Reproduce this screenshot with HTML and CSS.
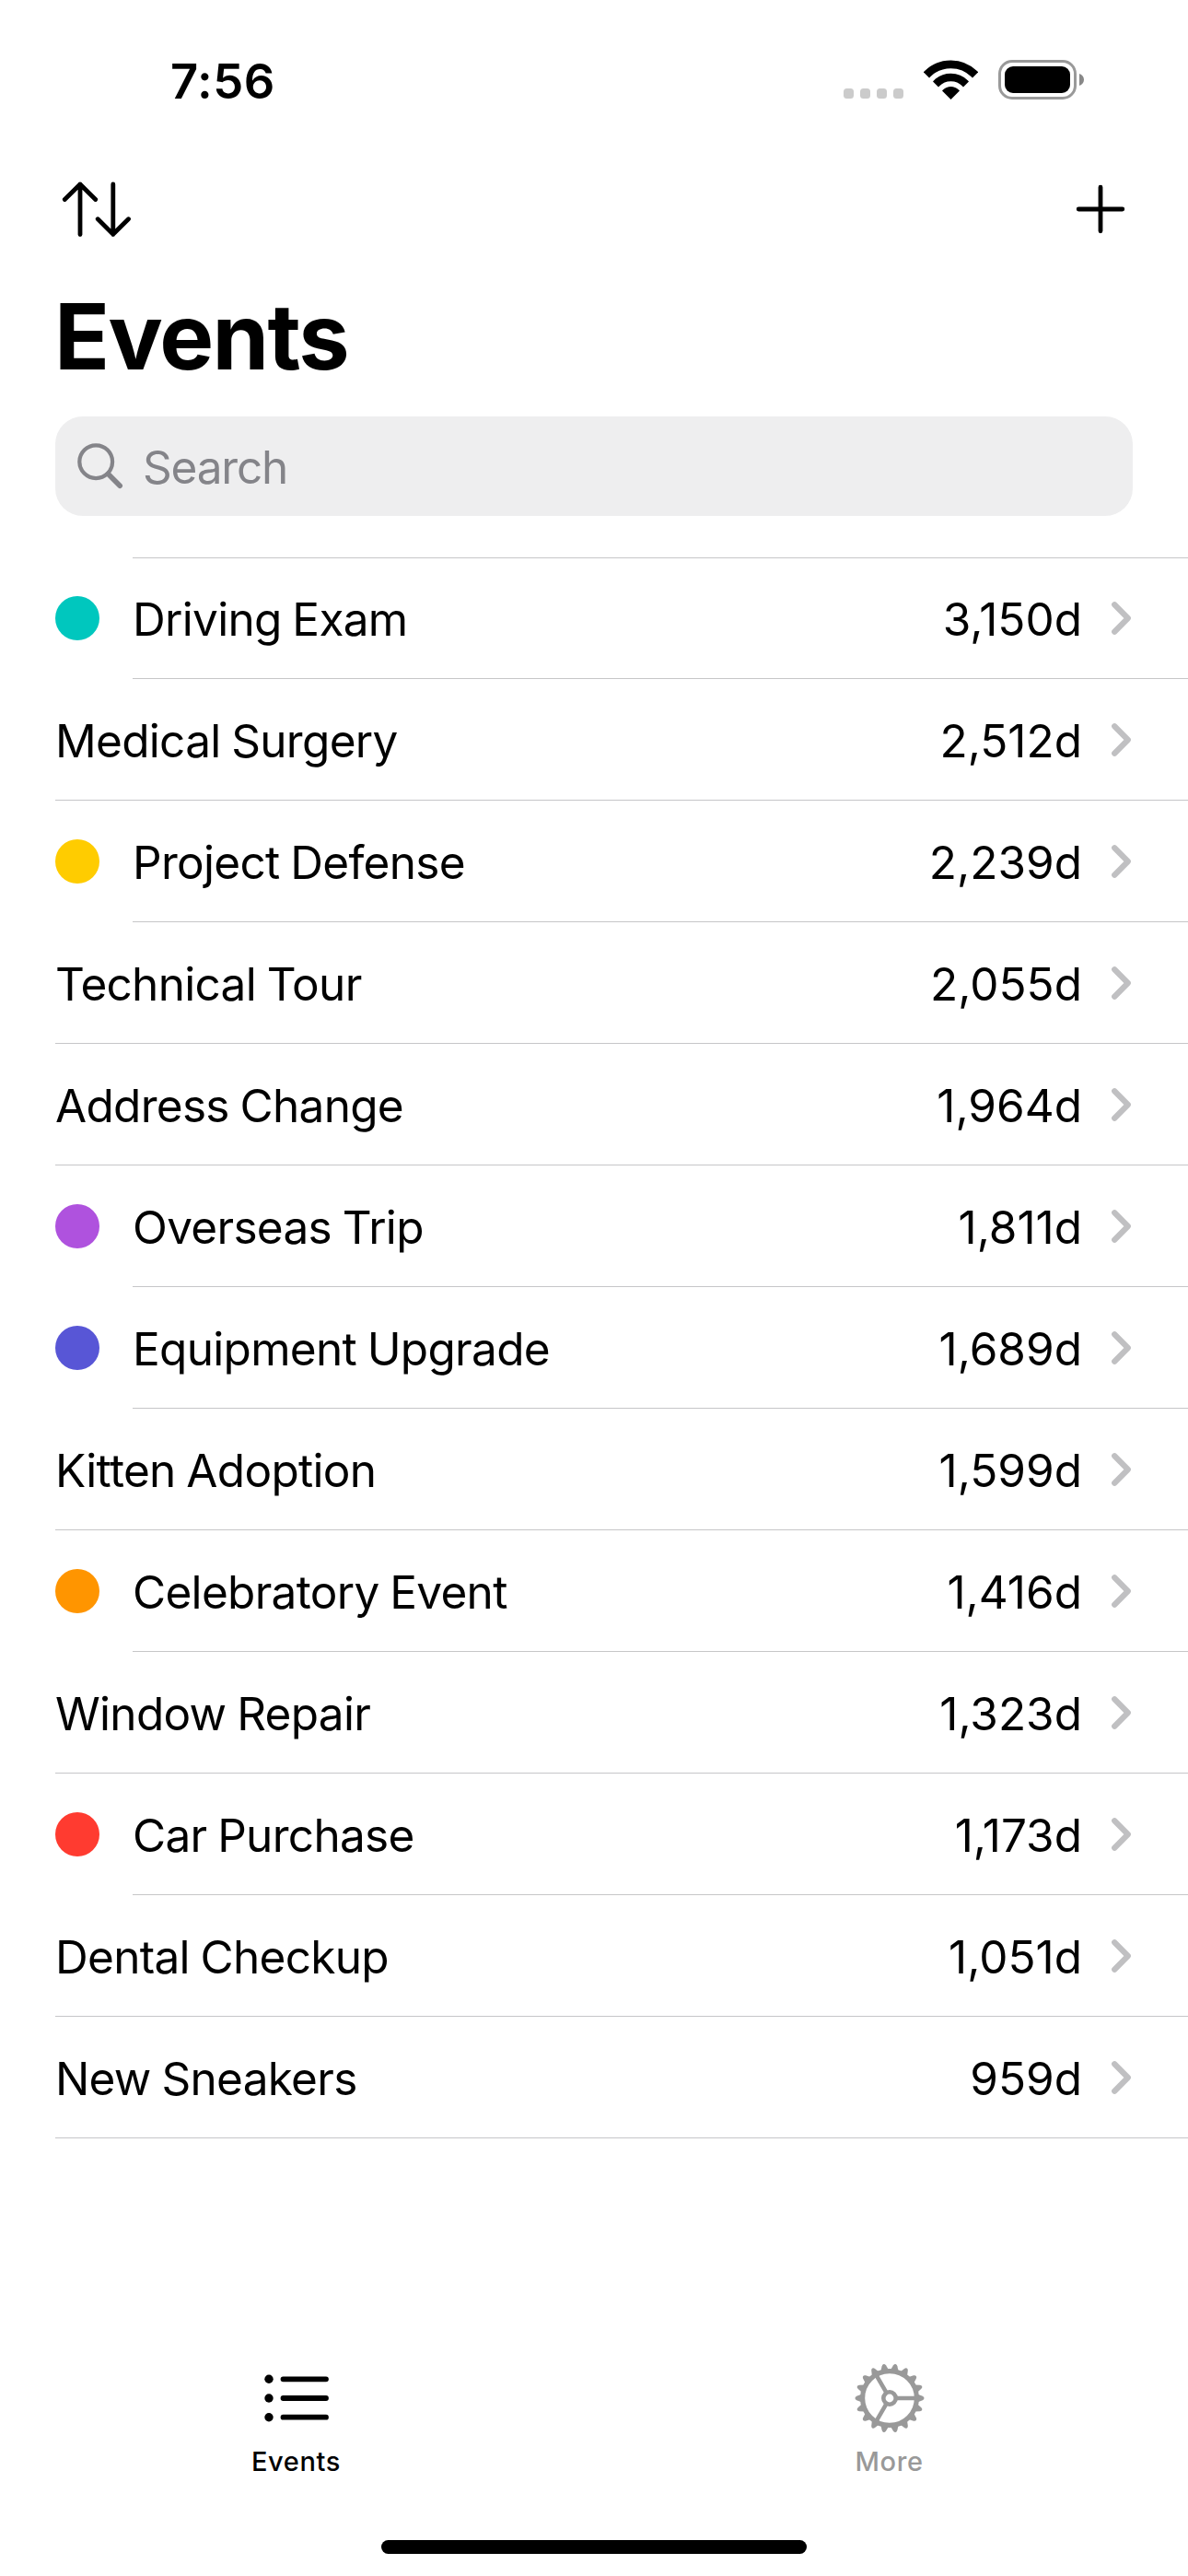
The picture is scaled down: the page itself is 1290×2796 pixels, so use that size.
FILE: index.html
```html
<!DOCTYPE html>
<html lang="en">
<head>
<meta charset="utf-8">
<title>Events</title>
<link rel="stylesheet" href="styles.css">
</head>
<body>
<svg class="defs" width="0" height="0" aria-hidden="true">
  <symbol id="chevron" viewBox="0 0 24 38"><path d="M4.200 4.200 18.800 19 4.200 33.800" fill="none" stroke="currentColor" stroke-width="6.200" stroke-linecap="round" stroke-linejoin="round"/></symbol>
</svg>
<div class="screen">
  <header class="status">
    <span class="time">7:56</span>
    <div class="indicators">
      <div class="signal"><i></i><i></i><i></i><i></i></div>
      <svg class="wifi" width="59" height="44" viewBox="0 0 59 44">
        <clipPath id="fan"><path d="M29.500 43-15-1.500H74z"/></clipPath>
        <g clip-path="url(#fan)">
          <circle cx="29.500" cy="41" r="36.200" fill="none" stroke="#000" stroke-width="8.800"/>
          <circle cx="29.500" cy="41" r="22" fill="none" stroke="#000" stroke-width="8.600"/>
          <circle cx="29.500" cy="41" r="12"/>
        </g>
      </svg>
      <svg class="battery" width="94" height="43" viewBox="0 0 94 43">
        <rect x="1.500" y="1.500" width="82" height="40" rx="13.500" fill="none" stroke="#999" stroke-width="3"/>
        <rect x="7" y="7" width="71" height="29" rx="9"/>
        <path d="M88 15c3 1 5 3.500 5 6.500s-2 5.500-5 6.500z" fill="#888"/>
      </svg>
    </div>
  </header>
  <nav class="toolbar">
    <svg width="78" height="62" viewBox="0 0 78 62"><path d="M20 3v54.500M3.300 19.500 20 3l16.700 16.500M55.800 3v54.500M39.200 40.700l16.600 16.500 16.700-16.500" fill="none" stroke="#000" stroke-width="4.800" stroke-linecap="round" stroke-linejoin="round"/></svg>
    <svg width="54" height="54" viewBox="0 0 54 54"><path d="M27 3.200v47.600M3.200 27h47.600" fill="none" stroke="#000" stroke-width="4.800" stroke-linecap="round"/></svg>
  </nav>
  <h1 class="title">Events</h1>
  <div class="search">
    <svg width="50" height="50" viewBox="0 0 50 50"><circle cx="20.200" cy="20.200" r="17.900" fill="none" stroke="currentColor" stroke-width="4.200"/><path d="M33.500 33.500 46.200 46.200" stroke="currentColor" stroke-width="5.600" stroke-linecap="round"/></svg>
    <span>Search</span>
  </div>
  <main class="list">
    <div class="row first"><i class="dot teal"></i><div class="cell"><span class="name">Driving Exam</span><span class="days">3,150d</span><svg class="chev"><use href="#chevron"/></svg></div></div>
    <div class="row"><div class="cell"><span class="name">Medical Surgery</span><span class="days">2,512d</span><svg class="chev"><use href="#chevron"/></svg></div></div>
    <div class="row"><i class="dot yellow"></i><div class="cell"><span class="name">Project Defense</span><span class="days">2,239d</span><svg class="chev"><use href="#chevron"/></svg></div></div>
    <div class="row"><div class="cell"><span class="name">Technical Tour</span><span class="days">2,055d</span><svg class="chev"><use href="#chevron"/></svg></div></div>
    <div class="row"><div class="cell"><span class="name">Address Change</span><span class="days">1,964d</span><svg class="chev"><use href="#chevron"/></svg></div></div>
    <div class="row"><i class="dot purple"></i><div class="cell"><span class="name">Overseas Trip</span><span class="days">1,811d</span><svg class="chev"><use href="#chevron"/></svg></div></div>
    <div class="row"><i class="dot indigo"></i><div class="cell"><span class="name">Equipment Upgrade</span><span class="days">1,689d</span><svg class="chev"><use href="#chevron"/></svg></div></div>
    <div class="row"><div class="cell"><span class="name">Kitten Adoption</span><span class="days">1,599d</span><svg class="chev"><use href="#chevron"/></svg></div></div>
    <div class="row"><i class="dot orange"></i><div class="cell"><span class="name">Celebratory Event</span><span class="days">1,416d</span><svg class="chev"><use href="#chevron"/></svg></div></div>
    <div class="row"><div class="cell"><span class="name">Window Repair</span><span class="days">1,323d</span><svg class="chev"><use href="#chevron"/></svg></div></div>
    <div class="row"><i class="dot red"></i><div class="cell"><span class="name">Car Purchase</span><span class="days">1,173d</span><svg class="chev"><use href="#chevron"/></svg></div></div>
    <div class="row"><div class="cell"><span class="name">Dental Checkup</span><span class="days">1,051d</span><svg class="chev"><use href="#chevron"/></svg></div></div>
    <div class="row"><div class="cell"><span class="name">New Sneakers</span><span class="days">959d</span><svg class="chev"><use href="#chevron"/></svg></div></div>
  </main>
  <footer class="tabs">
    <div class="tab active">
      <svg width="76" height="76" viewBox="-38 -38 76 76"><g fill="currentColor"><circle cx="-30" cy="-20.700" r="4.700"/><circle cx="-30" cy="0" r="4.700"/><circle cx="-30" cy="20.700" r="4.700"/></g><path d="M-14.500-20.700h46.500M-14.500 0h46.500M-14.500 20.700h46.500" stroke="currentColor" stroke-width="5.800" stroke-linecap="round"/></svg>
      <span class="label">Events</span>
    </div>
    <div class="tab">
      <svg width="76" height="76" viewBox="-38 -38 76 76">
        <defs><path id="t" d="M30-4.600 35.800-2.200Q37.500-1.400 37.500 0T35.800 2.200L30 4.600z"/><g id="t3"><use href="#t"/><use href="#t" transform="rotate(20)"/><use href="#t" transform="rotate(40)"/></g></defs>
        <g fill="currentColor"><use href="#t3"/><use href="#t3" transform="rotate(60)"/><use href="#t3" transform="rotate(120)"/><use href="#t3" transform="rotate(180)"/><use href="#t3" transform="rotate(240)"/><use href="#t3" transform="rotate(300)"/></g>
        <g fill="none" stroke="currentColor"><circle r="29.400" stroke-width="5.200"/><circle r="6.700" stroke-width="4.600"/><path d="M8 0H28M-4-6.900-14-24.200M-4 6.900-14 24.200" stroke-width="4.500"/></g>
      </svg>
      <span class="label">More</span>
    </div>
  </footer>
  <div class="home"></div>
</div>
</body>
</html>
```
FILE: styles.css
```css
* { box-sizing: border-box; }
body { margin: 0; background: #fff; color: #000; font-family: Inter, "Liberation Sans", sans-serif; }
.defs { position: absolute; }
svg { display: block; flex: none; }
.screen { width: 1290px; height: 2796px; display: flex; flex-direction: column; }
.status { height: 174px; padding: 0 112px 0 185px; display: flex; justify-content: space-between; }
.time { padding-top: 56px; font-size: 52.5px; line-height: 64px; font-weight: 600; letter-spacing: 0.5px; }
.indicators { display: flex; padding-top: 65px; }
.signal { display: flex; gap: 7px; padding-top: 31px; }
.signal i { width: 11px; height: 11px; border-radius: 3.5px; background: #cbcbcb; }
.wifi { margin-left: 22px; }
.battery { margin-left: 22px; }
.toolbar { height: 132px; padding: 23px 68px 0 67px; display: flex; justify-content: space-between; }
.toolbar svg + svg { margin-top: 3px; }
.title { margin: 0; height: 146px; padding: 0 59px; font-size: 99px; line-height: 119px; font-weight: 700; letter-spacing: -1.7px; }
.search { margin: 0 60px; height: 108px; flex: none; padding: 0 24px; border-radius: 30px; background: #eeeeef; color: #848489; display: flex; align-items: center; gap: 21px; font-size: 49.5px; line-height: 60px; letter-spacing: -1.2px; }
.search span { padding-top: 1px; }
.list { margin-top: 45px; }
.row { height: 132px; padding-left: 60px; display: flex; align-items: center; }
.dot { width: 48px; height: 48px; margin-right: 36px; border-radius: 50%; flex: none; }
.cell { flex: 1; height: 100%; padding-right: 60px; border-bottom: 1px solid #c6c6c8; display: flex; align-items: center; font-size: 49.5px; line-height: 60px; }
.first .cell { border-top: 1px solid #c6c6c8; }
.name { flex: none; padding-top: 3px; letter-spacing: -0.7px; word-spacing: -1.5px; }
.days { margin-left: auto; padding-top: 3px; }
.first .name, .first .days { padding-top: 1px; }
.chev { width: 24px; height: 38px; margin-left: 31px; color: #c0c0c2; }
.teal { background: #00c7be; }
.yellow { background: #fc0; }
.purple { background: #af52de; }
.indigo { background: #5856d6; }
.orange { background: #ff9500; }
.red { background: #ff3b30; }
.tabs { margin-top: 244px; padding-right: 2px; display: grid; grid-template-columns: 643px 645px; color: #999; }
.tab { display: flex; flex-direction: column; align-items: center; }
.tab.active { color: #000; }
.label { margin-top: 13px; font-size: 29px; line-height: 36px; font-weight: 500; letter-spacing: 0.6px; }
.home { width: 462px; height: 15px; margin: auto auto 24px; border-radius: 7.5px; background: #000; }
```
